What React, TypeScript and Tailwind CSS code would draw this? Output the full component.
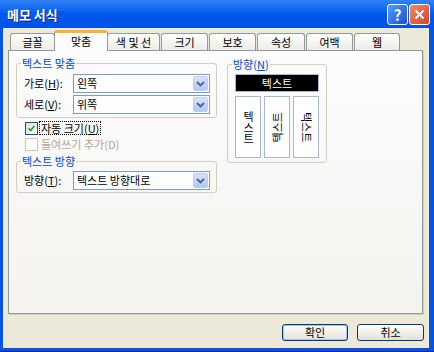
import type { ReactNode } from "react";

const tabs = [
  { label: "글꼴", w: "w-[45px]" },
  { label: "맞춤", w: "w-[54px]", active: true },
  { label: "색 및 선", w: "w-[53px]" },
  { label: "크기", w: "w-[47px]" },
  { label: "보호", w: "w-[47px]" },
  { label: "속성", w: "w-[48px]" },
  { label: "여백", w: "w-[47px]" },
  { label: "웹", w: "w-[46px]" },
];

function Chevron() {
  return (
    <svg width="9" height="6" viewBox="0 0 9 6">
      <path d="M1 1l3.5 3.5L8 1" fill="none" stroke="#4D6185" strokeWidth="1.8" />
    </svg>
  );
}

function Combo({ value }: { value: string }) {
  return (
    <div className="flex h-[19px] w-[137px] items-center border border-[#7F9DB9] bg-white">
      <span className="flex-1 pl-[3px] leading-none">{value}</span>
      <span className="m-px flex h-[15px] w-[15px] items-center justify-center rounded-[2px] border border-[#BCCDF5] bg-linear-to-b from-[#D6E3FD] to-[#B4C8F6]">
        <Chevron />
      </span>
    </div>
  );
}

function Group({ title, className, children }: { title: ReactNode; className?: string; children: ReactNode }) {
  return (
    <fieldset className={`rounded-[3px] border border-[#D0D0BF] ${className ?? ""}`}>
      <legend className="ml-[4px] px-[1px] leading-[14px] text-[#0046D5]">{title}</legend>
      {children}
    </fieldset>
  );
}

function Row({ label, value }: { label: ReactNode; value: string }) {
  return (
    <div className="flex items-center">
      <span className="w-[49px] leading-none">{label}</span>
      <Combo value={value} />
    </div>
  );
}

function Check({ checked, disabled }: { checked?: boolean; disabled?: boolean }) {
  return (
    <span
      className={`flex h-[13px] w-[13px] items-center justify-center border ${
        disabled ? "border-[#CAC8BB] bg-white" : "border-[#1C5180] bg-linear-to-br from-[#DCDCD7] to-white"
      }`}
    >
      {checked && (
        <svg width="7" height="7" viewBox="0 0 7 7">
          <path d="M0.6 3.4l2 2.1L6.4 1" fill="none" stroke="#21A121" strokeWidth="1.7" />
        </svg>
      )}
    </span>
  );
}

export default function App() {
  return (
    <div className="flex h-[352px] w-[434px] flex-col border-b border-[#001EA0] bg-[#0553E1] font-['Noto_Sans_CJK_KR','Noto_Sans',sans-serif] text-[11px] text-black">
      {/* title bar */}
      <div className="flex h-[28px] items-center bg-linear-to-b from-[#2F83F5] via-[#0058EE] to-[#0052E2] pl-[7px] pr-[4px]">
        <span className="flex-1 text-[13px] font-bold leading-none text-white [text-shadow:1px_1px_0_#0F1E88]">메모 서식</span>
        <div className="flex gap-[1px]">
          <span className="flex h-[21px] w-[21px] items-center justify-center rounded-[3px] border border-white bg-linear-to-br from-[#5B9BFF] to-[#1A4FD6] text-[15px] font-bold leading-none text-white">
            ?
          </span>
          <span className="flex h-[21px] w-[21px] items-center justify-center rounded-[3px] border border-white bg-linear-to-br from-[#F08A6E] to-[#D0401F]">
            <svg width="11" height="11" viewBox="0 0 11 11">
              <path d="M1.5 1.5l8 8M9.5 1.5l-8 8" stroke="white" strokeWidth="2" />
            </svg>
          </span>
        </div>
      </div>

      <div className="mb-[3px] ml-[3px] mr-[5px] flex flex-1 flex-col bg-[#ECE9D8] pl-[5px] pt-[2px]">
        {/* tabs */}
        <div className="ml-[2px] flex h-[20px] items-end gap-[1px]">
          {tabs.map((t) =>
            t.active ? (
              <div
                key={t.label}
                className={`relative z-10 -mx-[2px] -mb-px flex h-[21px] ${t.w} items-center justify-center rounded-t-[3px] border border-b-0 border-[#919B9C] border-t-[3px] border-t-[#F7B23C] bg-[#FCFCFE] pb-[2px] leading-none`}
              >
                {t.label}
              </div>
            ) : (
              <div
                key={t.label}
                className={`flex h-[17px] ${t.w} items-center justify-center rounded-t-[3px] border border-b-0 border-[#919B9C] bg-linear-to-b from-white to-[#ECEBE6] leading-none`}
              >
                {t.label}
              </div>
            )
          )}
        </div>

        {/* panel */}
        <div className="flex h-[264px] w-[415px] gap-[10px] border border-[#919B9C] bg-linear-to-b from-[#FCFCFE] to-[#F4F3EE] pl-[7px] shadow-[1px_1px_0_#D0CEBF]">
          <div className="mt-[5px] flex w-[201px] flex-col">
            <Group title="텍스트 맞춤">
              <div className="flex flex-col gap-[2px] pb-[3px] pl-[7px] pt-[4px]">
                <Row label={<>가로(<u>H</u>):</>} value="왼쪽" />
                <Row label={<>세로(<u>V</u>):</>} value="위쪽" />
              </div>
            </Group>

            <div className="mt-[2px] flex h-[16px] items-center pl-[9px]">
              <Check checked />
              <span className="ml-px border border-dotted border-black px-[1px] leading-[12px]">
                자동 크기(<u>U</u>)
              </span>
            </div>
            <div className="flex h-[16px] items-center pl-[9px] text-[#ACA899]">
              <Check disabled />
              <span className="ml-[3px] leading-none">들여쓰기 추가(D)</span>
            </div>

            <Group title="텍스트 방향" className="mt-[2px]">
              <div className="pb-[2px] pl-[7px] pt-[3px]">
                <Row label={<>방향(<u>T</u>):</>} value="텍스트 방향대로" />
              </div>
            </Group>
          </div>

          <Group title={<>방향(<u>N</u>)</>} className="mt-[6px] h-fit w-[100px] self-start">
            <div className="flex flex-col gap-[4px] px-[7px] pb-[4px] pt-[3px]">
              <div className="flex h-[18px] items-center justify-center border border-[#A5B9D1] bg-black leading-none text-white">
                텍스트
              </div>
              <div className="flex h-[62px] gap-[3px]">
                <div className="flex w-[26px] items-center justify-center border border-[#A5B9D1] bg-white">
                  <span className="leading-none [text-orientation:upright] [writing-mode:vertical-rl]">텍스트</span>
                </div>
                <div className="flex w-[26px] items-center justify-center border border-[#A5B9D1] bg-white">
                  <span className="rotate-180 leading-none [text-orientation:sideways] [writing-mode:vertical-rl]">텍스트</span>
                </div>
                <div className="flex w-[26px] items-center justify-center border border-[#A5B9D1] bg-white">
                  <span className="leading-none [text-orientation:sideways] [writing-mode:vertical-rl]">텍스트</span>
                </div>
              </div>
            </div>
          </Group>
        </div>

        {/* buttons */}
        <div className="mt-[10px] flex justify-end gap-[9px] pr-[5px]">
          <button className="flex h-[17px] w-[66px] items-center justify-center rounded-[3px] border border-[#003C74] bg-linear-to-b from-white to-[#E3E0D6] leading-none shadow-[inset_0_0_0_1px_#A8C3F0]">
            확인
          </button>
          <button className="flex h-[17px] w-[67px] items-center justify-center rounded-[3px] border border-[#003C74] bg-linear-to-b from-white to-[#E3E0D6] leading-none">
            취소
          </button>
        </div>
      </div>
    </div>
  );
}
